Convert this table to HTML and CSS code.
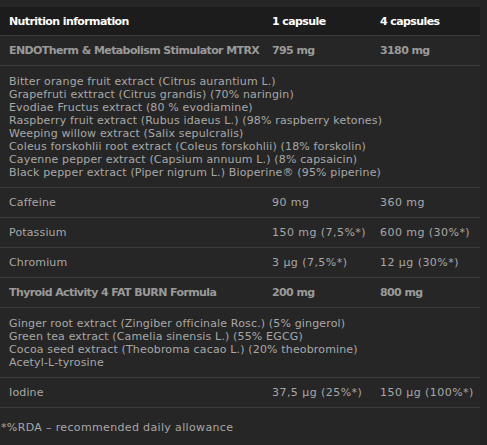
FILE: index.html
```html
<!DOCTYPE html>
<html>
<head>
<meta charset="utf-8">
<link rel="stylesheet" href="styles.css">
</head>
<body>
<div class="page">
  <table class="nutri">
    <colgroup><col class="c1"><col class="c2"><col class="c3"></colgroup>
    <thead>
      <tr><th>Nutrition information</th><th>1 capsule</th><th>4 capsules</th></tr>
    </thead>
    <tbody>
      <tr class="bold"><td>ENDOTherm &amp; Metabolism Stimulator MTRX</td><td>795 mg</td><td>3180 mg</td></tr>
      <tr class="list"><td colspan="3">Bitter orange fruit extract (Citrus aurantium L.)<br>Grapefruti exttract (Citrus grandis) (70% naringin)<br>Evodiae Fructus extract (80 % evodiamine)<br>Raspberry fruit extract (Rubus idaeus L.) (98% raspberry ketones)<br>Weeping willow extract (Salix sepulcralis)<br>Coleus forskohlii root extract (Coleus forskohlii) (18% forskolin)<br>Cayenne pepper extract (Capsium annuum L.) (8% capsaicin)<br>Black pepper extract (Piper nigrum L.) Bioperine® (95% piperine)</td></tr>
      <tr><td>Caffeine</td><td class="val">90 mg</td><td class="val">360 mg</td></tr>
      <tr><td>Potassium</td><td class="val">150 mg (7,5%*)</td><td class="val">600 mg (30%*)</td></tr>
      <tr><td>Chromium</td><td class="val">3 µg (7,5%*)</td><td class="val">12 µg (30%*)</td></tr>
      <tr class="bold"><td>Thyroid Activity 4 FAT BURN Formula</td><td>200 mg</td><td>800 mg</td></tr>
      <tr class="list"><td colspan="3">Ginger root extract (Zingiber officinale Rosc.) (5% gingerol)<br>Green tea extract (Camelia sinensis L.) (55% EGCG)<br>Cocoa seed extract (Theobroma cacao L.) (20% theobromine)<br>Acetyl-L-tyrosine</td></tr>
      <tr><td>Iodine</td><td class="val">37,5 µg (25%*)</td><td class="val">150 µg (100%*)</td></tr>
    </tbody>
  </table>
  <p class="note">*%RDA – recommended daily allowance</p>
</div>
</body>
</html>
```
FILE: styles.css
```css
html, body {
  margin: 0;
  padding: 0;
  background: #232323;
}
.page {
  width: 480px;
  min-height: 445px;
  background: #262626;
  padding-top: 7px;
  box-sizing: border-box;
  font-family: "DejaVu Sans", Verdana, sans-serif;
  font-size: 11px;
  letter-spacing: 0.15px;
  color: #a8a8a8;
}
.nutri {
  width: 480px;
  border-collapse: collapse;
  table-layout: fixed;
}
.c1 { width: 263px; }
.c2 { width: 108px; }
.c3 { width: 109px; }
.nutri th {
  background: #1c1c1c;
  color: #ffffff;
  font-weight: bold;
  letter-spacing: -0.6px;
  text-align: left;
  padding: 8px 9px 7px;
  line-height: 13px;
  border-bottom: 1px solid #3c3c3c;
}
.nutri td {
  padding: 8px 9px;
  line-height: 13px;
  vertical-align: top;
  border-bottom: 1px solid #3c3c3c;
  white-space: nowrap;
}
.nutri td.val {
  letter-spacing: 0.45px;
}
.nutri .list td {
  padding-top: 9px;
}
.nutri .bold td {
  font-weight: bold;
  letter-spacing: -0.6px;
  color: #9a9a9a;
}
.note {
  margin: 13px 0 0 1px;
  line-height: 13px;
  letter-spacing: 0.35px;
}
```
